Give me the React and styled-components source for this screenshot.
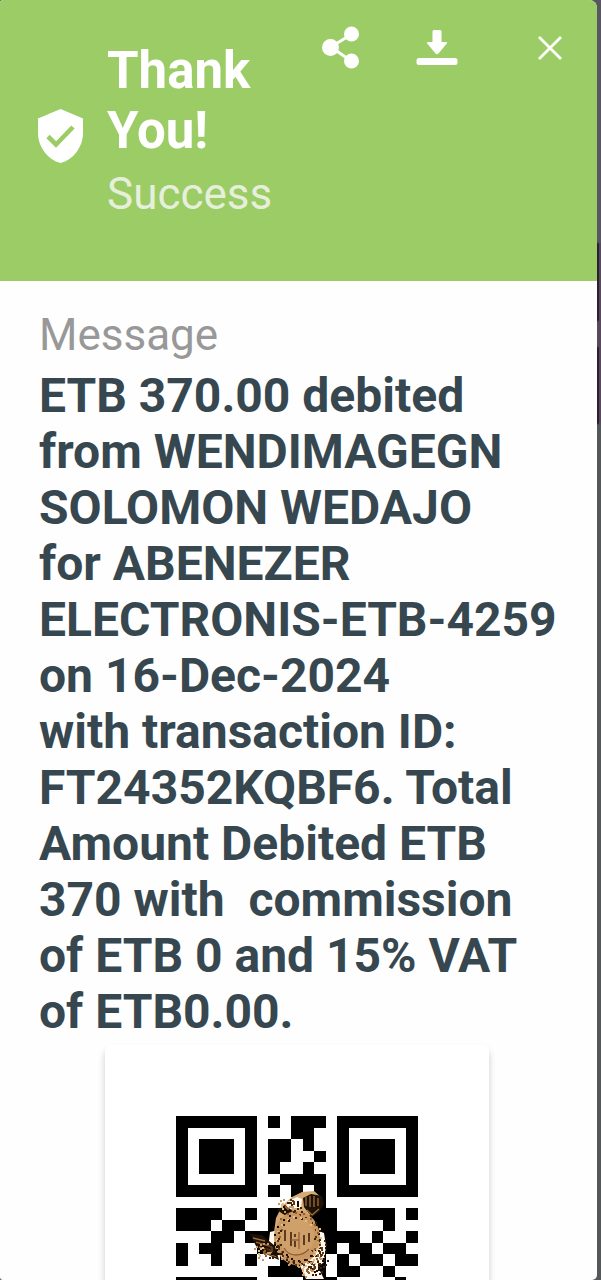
import React from "react";
import styled, { createGlobalStyle } from "styled-components";

const GlobalStyle = createGlobalStyle`
  *, *::before, *::after { box-sizing: border-box; }
  html, body, #root { height: 100%; }
  body {
    margin: 0;
    overflow: hidden;
    background: #58585a;
    font-family: Roboto, "Noto Sans", sans-serif;
  }
`;

const Backdrop = styled.div`
  height: 100%;
  padding-right: 4px;
  background:
    linear-gradient(transparent 242px, #2a2030 244px 320px, transparent 322px 346px, #2a2030 348px 423px, transparent 425px)
      right 2px top / 2px 100% no-repeat,
    linear-gradient(#58565f 0 242px, #564a5c 244px 423px, #555859 425px);
`;

const Sheet = styled.main`
  height: 100%;
  display: flex;
  flex-direction: column;
  overflow: hidden;
  background: #fefefe;
  border-radius: 3px 8px 5px 3px;
`;

const Header = styled.header`
  flex: none;
  display: flex;
  justify-content: space-between;
  align-items: flex-start;
  padding: 26px 23px 50px 34px;
  background: #9ccc65;
  color: #fff;
`;

const Status = styled.div`
  display: flex;
  align-items: center;
  gap: 20px;
  padding-top: 15px;
`;

const StatusText = styled.div`
  width: 168px;
  padding-bottom: 11px;
`;

const Title = styled.h1`
  margin: 0;
  font-size: 51px;
  font-weight: 700;
  line-height: 60px;
`;

const Subtitle = styled.p`
  margin: 0;
  padding-top: 7px;
  font-size: 44px;
  line-height: 52px;
  color: #e6efdc;
`;

const Actions = styled.div`
  display: flex;
  gap: 49px;
`;

const IconButton = styled.button`
  display: flex;
  align-items: center;
  justify-content: center;
  width: 48px;
  height: 44px;
  padding: 0;
  border: 0;
  background: none;
  color: inherit;
  margin-left: ${(p) => (p.$apart ? "16px" : "0")};
`;

const Body = styled.section`
  flex: none;
  padding: 28px 42px 0 39px;
`;

const Label = styled.h2`
  margin: 0;
  font-size: 44px;
  font-weight: 400;
  line-height: 52px;
  color: #989898;
`;

const Message = styled.p`
  margin: 7px 0 0;
  font-size: 48px;
  font-weight: 700;
  line-height: 56px;
  color: #37474f;
  white-space: pre;
`;

const Code = styled.figure`
  width: 384px;
  height: 384px;
  margin: 5px auto 0;
  padding: 71px;
  border-radius: 6px;
  background: #fff;
  box-shadow: 0 5px 7px rgba(0, 0, 0, 0.2);
`;

const QR_ROWS = [
  "#######.#.###.#######",
  "#.....#...##..#.....#",
  "#.###.#.##.#..#.###.#",
  "#.###.#.##..#.#.###.#",
  "#.###.#.#..#..#.###.#",
  "#.....#..####.#.....#",
  "#######.#.#.#.#######",
  "...........##........",
  "####..#.######..###.#",
  "###.##..######....#..",
  "...##.##########.#..#",
  "#.##...#######.##.##.",
  "#..#..#..####.#.##.##",
  "........#####.##..#..",
  "#######....###.....#.",
  "#.....#.##...#.#.#..#",
  "#.###.#..#.##.##..##.",
  "#.###.#.#.#..#..##..#",
  "#.###.#.##..#.##...#.",
  "#.....#..##..#..#.##.",
  "#######.#..##.##..#.#",
];

const qrPath = QR_ROWS.flatMap((row, y) =>
  [...row].map((c, x) => (c === "#" ? `M${x} ${y}h1v1h-1z` : ""))
).join("");

const INKS = ["#3a220c", "#8f5f2e", "#1a0f05", "#c99862", "#5b3817", "#e6bd86"];

const speckles = (count, cx, cy, rx, ry, inner) =>
  Array.from({ length: count }, (_, i) => {
    const angle = i * 2.39996;
    const radius = inner + (1 - inner) * (((i * 37) % 50) / 50);
    return {
      x: Math.round(cx + Math.cos(angle) * rx * radius),
      y: Math.round(cy + Math.sin(angle) * ry * radius),
      ink: INKS[(i * 5 + (i >> 2)) % INKS.length],
    };
  });

const EMBLEM_DOTS = [
  ...speckles(120, 57, 58, 24, 28, 0.72),
  ...speckles(44, 79, 74, 9, 18, 0.1),
  ...speckles(40, 70, 88, 13, 9, 0.1),
  ...speckles(28, 49, 24, 12, 8, 0.2),
  ...speckles(40, 27, 70, 14, 10, 0.1),
];

function Emblem() {
  return (
    <>
      <path d="M76 50 84 53 86 66 84 82 78 87 84 99 66 99 60 86 74 76ZM30 52 38 50 37 80 28 70Z" fill="#fff8ee" />
      <path d="M34 52 36 38 42 26 52 17 62 12 74 11 82 18 80 28 72 36 62 34 44 38Z" fill="#d7aa75" />
      <path d="M47 22 57 17 62 19 61 28 53 28 46 31Z" fill="#fff8ee" />
      <path d="M63 18 71 14 82 16 84 24 79 32 72 37 64 27ZM10 54 22 55 35 66 39 80 26 74 17 68ZM37 30 45 25 54 32 46 36Z" fill="#1d1208" />
      <path d="M66 17v9M70 16v11M74 16v11M78 18v8M67 30l5 5 7-6M13 58l12 3M16 62l14 4M19 67l14 4M25 73l12 4" fill="none" stroke="#a06c36" strokeWidth="1.3" />
      <ellipse cx="57" cy="58" rx="23" ry="27" fill="#c99862" />
      <ellipse cx="57" cy="57" rx="17" ry="19" fill="#d0a06b" />
      {EMBLEM_DOTS.map((dot, i) => (
        <rect key={i} x={dot.x} y={dot.y} width="2" height="2" fill={dot.ink} />
      ))}
      <path d="M51 52v14M55 54v3M55 61v6M64 55v10M69 53v9M45 50v11" stroke="#41240f" strokeWidth="1.6" />
      <path d="M44 68q4 7 12 7t13-6M59 52v17M51 60h8" fill="none" stroke="#925f34" strokeWidth="1.3" />
    </>
  );
}

function QrCode() {
  return (
    <svg width="100%" viewBox="0 0 242 242" role="img" aria-label="Transaction QR code">
      <g transform="scale(11.5238)" shapeRendering="crispEdges">
        <path d={qrPath} fill="#000" />
      </g>
      <g transform="translate(64 64)">
        <Emblem />
      </g>
    </svg>
  );
}

export default function App() {
  return (
    <>
      <GlobalStyle />
      <Backdrop>
        <Sheet>
          <Header>
            <Status>
              <svg width="53" height="56" viewBox="0 0 53 56" aria-hidden="true">
                <path fill="#fff" d="M26.500 1 49 10.500V25C49 39 39 52 26.500 55 14 52 4 39 4 25V10.500Z" />
                <path fill="none" stroke="#9ccc65" strokeWidth="4.600" d="M14 28.500 22 36.500 39 19" />
              </svg>
              <StatusText>
                <Title>Thank You!</Title>
                <Subtitle>Success</Subtitle>
              </StatusText>
            </Status>
            <Actions>
              <IconButton type="button" aria-label="Share">
                <svg width="40" height="44" viewBox="0 0 40 44" aria-hidden="true">
                  <path d="M11 21 31 8.500M11 21 31 35" stroke="#fff" strokeWidth="2.800" />
                  <g fill="#fff">
                    <circle cx="10.500" cy="21.500" r="8.500" />
                    <circle cx="31.500" cy="8" r="7.500" />
                    <circle cx="31.500" cy="35" r="7.500" />
                  </g>
                </svg>
              </IconButton>
              <IconButton type="button" aria-label="Download">
                <svg width="42" height="44" viewBox="0 0 42 44" aria-hidden="true">
                  <path fill="#fff" d="M18 4h6q1.500 0 1.500 1.500V16h4.500q2 0 .8 1.500L22.500 27.500q-1.500 1.500-3 0L11.200 17.500Q10 16 12 16h4.500V5.500Q16.500 4 18 4Z" />
                  <rect x="0.500" y="32" width="41" height="7" rx="2.500" fill="#fff" />
                </svg>
              </IconButton>
              <IconButton type="button" aria-label="Close" $apart>
                <svg width="26" height="26" viewBox="0 0 26 26" aria-hidden="true">
                  <path d="M2 2 24 24M24 2 2 24" stroke="#fff" strokeWidth="2.800" />
                </svg>
              </IconButton>
            </Actions>
          </Header>
          <Body>
            <Label>Message</Label>
            <Message>
              {"ETB 370.00 debited\nfrom WENDIMAGEGN\nSOLOMON WEDAJO\nfor ABENEZER\nELECTRONIS-ETB-4259\non 16-Dec-2024\nwith transaction ID:\nFT24352KQBF6. Total\nAmount Debited ETB\n370 with \u00a0commission\nof ETB 0 and 15% VAT\nof ETB0.00."}
            </Message>
            <Code>
              <QrCode />
            </Code>
          </Body>
        </Sheet>
      </Backdrop>
    </>
  );
}
